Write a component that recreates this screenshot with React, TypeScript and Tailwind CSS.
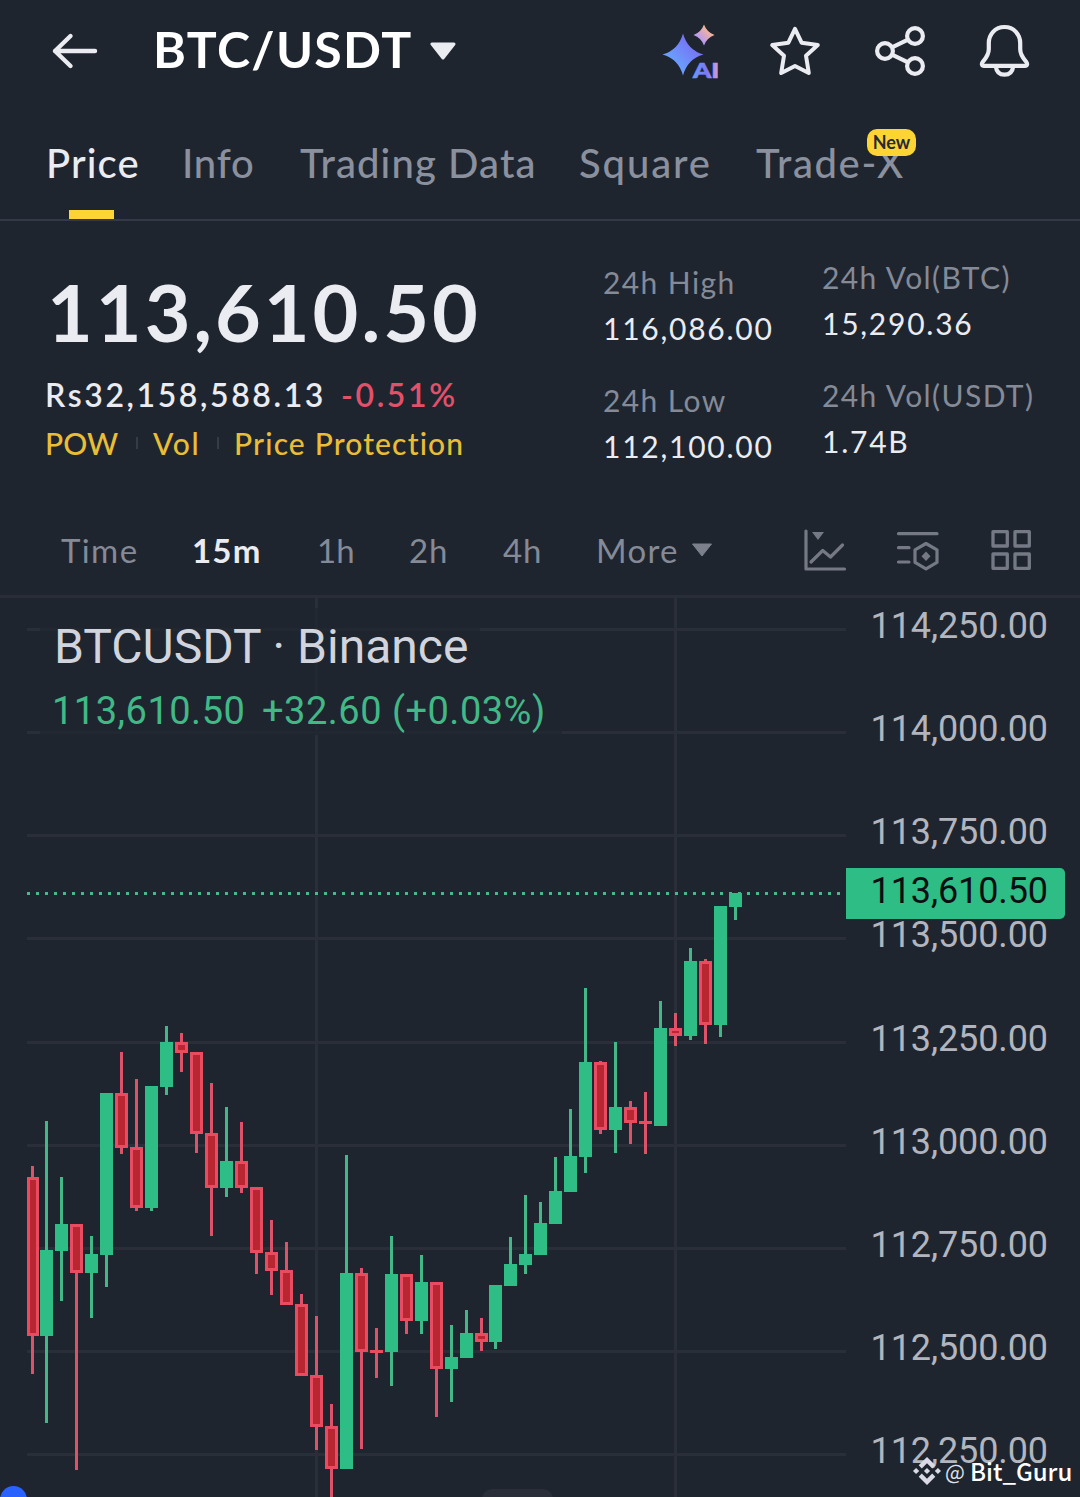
type Candle = { x: number; top: number; bottom: number; high: number; low: number; up: boolean };

// [left, body top, body bottom, high, low, up]
const rows: [number, number, number, number, number, 0 | 1][] = [
  [40, 1250, 1336, 1121, 1423, 1],
  [55, 1224, 1251, 1177, 1301, 1],
  [70, 1224, 1273, 1224, 1470, 0],
  [85, 1254, 1273, 1236, 1318, 1],
  [100, 1093, 1255, 1093, 1287, 1],
  [115, 1093, 1148, 1052, 1154, 0],
  [130, 1147, 1208, 1079, 1211, 0],
  [145, 1086, 1208, 1086, 1211, 1],
  [160, 1042, 1087, 1026, 1095, 1],
  [175, 1042, 1053, 1033, 1072, 0],
  [190, 1052, 1134, 1052, 1153, 0],
  [205, 1133, 1188, 1083, 1236, 0],
  [220, 1161, 1188, 1107, 1197, 1],
  [235, 1161, 1188, 1122, 1193, 0],
  [250, 1187, 1253, 1187, 1274, 0],
  [265, 1252, 1271, 1220, 1295, 0],
  [280, 1270, 1305, 1242, 1305, 0],
  [295, 1304, 1376, 1294, 1376, 0],
  [310, 1375, 1427, 1316, 1450, 0],
  [325, 1426, 1469, 1404, 1497, 0],
  [340, 1273, 1469, 1155, 1469, 1],
  [355, 1273, 1352, 1268, 1449, 0],
  [370, 1350, 1353, 1328, 1378, 0],
  [385, 1274, 1352, 1236, 1386, 1],
  [400, 1274, 1321, 1274, 1334, 0],
  [415, 1282, 1321, 1255, 1334, 1],
  [430, 1282, 1369, 1282, 1417, 0],
  [445, 1357, 1369, 1325, 1402, 1],
  [460, 1333, 1358, 1310, 1358, 1],
  [475, 1333, 1342, 1318, 1351, 0],
  [489, 1285, 1342, 1285, 1349, 1],
  [504, 1264, 1286, 1237, 1286, 1],
  [519, 1254, 1265, 1195, 1274, 1],
  [534, 1223, 1255, 1202, 1255, 1],
  [549, 1191, 1224, 1157, 1224, 1],
  [564, 1156, 1192, 1109, 1192, 1],
  [579, 1062, 1157, 988, 1173, 1],
  [594, 1062, 1130, 1061, 1134, 0],
  [609, 1107, 1130, 1042, 1153, 1],
  [624, 1107, 1123, 1101, 1144, 0],
  [639, 1121, 1124, 1092, 1154, 0],
  [654, 1028, 1126, 1001, 1126, 1],
  [669, 1028, 1036, 1013, 1046, 0],
  [684, 961, 1036, 948, 1040, 1],
  [699, 961, 1025, 959, 1044, 0],
  [714, 906, 1025, 906, 1037, 1],
  [729, 893, 907, 893, 920, 1],
];

const candles: Candle[] = rows.map(([x, top, bottom, high, low, up]) => ({
  x,
  top,
  bottom,
  high,
  low,
  up: up === 1,
}));

const gridRows = [629, 732, 835, 938, 1042, 1145, 1248, 1351, 1454];

const axisLabels = [
  "114,250.00",
  "114,000.00",
  "113,750.00",
  "113,500.00",
  "113,250.00",
  "113,000.00",
  "112,750.00",
  "112,500.00",
  "112,250.00",
];

const tabs = [
  { label: "Price", box: "w-[136px] tracking-[1.1px]", active: true },
  { label: "Info", box: "w-[118px] tracking-[0.8px]" },
  { label: "Trading Data", box: "w-[279px] tracking-[1.1px]" },
  { label: "Square", box: "w-[177px] tracking-[1.9px]" },
  { label: "Trade-X", box: "w-[160px] tracking-[1.6px]", badge: "New" },
];

const intervals = [
  { label: "Time", box: "w-[131px] tracking-[1.4px]" },
  { label: "15m", box: "w-[125px] tracking-[1.2px]", active: true },
  { label: "1h", box: "w-[92px] tracking-[0px]" },
  { label: "2h", box: "w-[94px] tracking-[0.8px]" },
  { label: "4h", box: "w-[93px] tracking-[0.8px]" },
  { label: "More", box: "w-[95px] tracking-[1.3px]" },
];

function Header() {
  return (
    <header className="flex h-[102px] items-center">
      <svg className="ml-[50px] h-[40px] w-[50px] shrink-0" viewBox="50 31 50 40" fill="none" stroke="#eaecf2" strokeWidth="4.4" strokeLinecap="round" strokeLinejoin="round">
        <path d="M95 51H55M70.5 36L55 51L70.5 66" />
      </svg>
      <h1 className="-mt-[4px] ml-[53px] w-[272px] shrink-0 whitespace-nowrap text-[50px] font-bold leading-[60px] tracking-[1.3px] text-white">BTC/USDT</h1>
      <svg className="ml-[4px] h-[18px] w-[28px] shrink-0" viewBox="0 0 28 18">
        <path d="M3 2H25L14 16Z" fill="#eaecf2" stroke="#eaecf2" strokeWidth="3" strokeLinejoin="round" />
      </svg>
      <svg className="ml-[203px] h-[60px] w-[64px] shrink-0" viewBox="660 21 64 60">
        <defs>
          <linearGradient id="spark" x1="0" y1="1" x2="1" y2="0">
            <stop offset="0.2" stopColor="#67a9ff" />
            <stop offset="0.7" stopColor="#7577f4" />
          </linearGradient>
          <linearGradient id="glow" x1="0" y1="1" x2="1" y2="0">
            <stop offset="0.3" stopColor="#b99af0" />
            <stop offset="0.7" stopColor="#f0b29c" />
          </linearGradient>
          <linearGradient id="ai" x1="0" y1="0" x2="1" y2="0">
            <stop offset="0" stopColor="#6a9bfb" />
            <stop offset="0.55" stopColor="#7b78f5" />
            <stop offset="1" stopColor="#d6a3d4" />
          </linearGradient>
        </defs>
        <path d="M683 33.5Q687.5 50 703.5 54.5Q687.5 59 683 75.5Q678.5 59 662.5 54.5Q678.5 50 683 33.5Z" fill="url(#spark)" />
        <path d="M704 24.5Q706.8 32.2 714.5 35Q706.8 37.8 704 45.5Q701.2 37.8 693.5 35Q701.2 32.2 704 24.5Z" fill="url(#glow)" />
        <text x="693" y="77.5" textLength="26" lengthAdjust="spacingAndGlyphs" fontSize="21" fontWeight="900" fill="url(#ai)" stroke="url(#ai)" strokeWidth="0.7">AI</text>
      </svg>
      <svg className="ml-[41px] h-[60px] w-[60px] shrink-0" viewBox="765 22 60 60" fill="none" stroke="#eaecf2" strokeWidth="4" strokeLinejoin="round">
        <path d="M795 29.8L801.6 43.7L817.8 46L806 56.7L808.8 74L795 67L781.2 74L784 56.7L772.2 46L788.4 43.7Z" />
      </svg>
      <svg className="ml-[45px] h-[60px] w-[60px] shrink-0" viewBox="870 21 60 60" fill="none" stroke="#eaecf2" strokeWidth="4.2">
        <circle cx="885" cy="51" r="7.9" />
        <circle cx="915" cy="36" r="7.9" />
        <circle cx="915" cy="66" r="7.9" />
        <path d="M892 47.3L908 39.6M892 54.7L908 62.4" />
      </svg>
      <svg className="ml-[44px] h-[60px] w-[60px] shrink-0" viewBox="974 21 60 60" fill="none" stroke="#eaecf2" strokeWidth="4.2" strokeLinejoin="round">
        <path d="M1004.5 27C995 27 988.8 34.5 988.8 43V49C988.8 55 986 58 983 61.5C981 64 982 65.8 984 65.8H1025C1027 65.8 1028 64 1026 61.5C1023 58 1020.2 55 1020.2 49V43C1020.2 34.5 1014 27 1004.5 27Z" />
        <path d="M995.8 66.5C996.5 72 1000 74.7 1004.5 74.7S1012.5 72 1013.2 66.5" />
      </svg>
    </header>
  );
}

function Tabs() {
  return (
    <nav className="flex h-[119px] border-b-2 border-[#343a45] pl-[46px] pt-[36px]">
      {tabs.map((tab) => (
        <div
          key={tab.label}
          className={`relative h-[81px] shrink-0 whitespace-nowrap text-[40px] font-medium leading-[50px] ${tab.box} ${
            tab.active ? "text-[#eaecf2]" : "text-[#8a909d]"
          }`}
        >
          {tab.label}
          {tab.active && <span className="absolute bottom-0 left-[23px] h-[9px] w-[45px] bg-[#fcd535]" />}
          {tab.badge && (
            <span className="absolute -top-[9px] left-[111px] h-[27px] w-[49px] rounded-[10px] bg-[#fcd535] text-center text-[18px] font-bold leading-[27px] tracking-[0px] text-[#252a33]">
              {tab.badge}
            </span>
          )}
        </div>
      ))}
    </nav>
  );
}

function Stat({ label, value }: { label: string; value: string }) {
  return (
    <div className="h-[118px] whitespace-nowrap text-[30px] leading-[46px]">
      <div className="tracking-[1.4px] text-[#858a97]">{label}</div>
      <div className="tracking-[1.75px] text-[#eaecf2]">{value}</div>
    </div>
  );
}

function Summary() {
  return (
    <section className="flex h-[285px]">
      <div className="w-[557px] pl-[45px] pt-[42px]">
        <div className="whitespace-nowrap pl-[2px] text-[79px] font-bold leading-[98px] tracking-[3px] text-[#eaecf2]">113,610.50</div>
        <div className="mt-[10px] flex whitespace-nowrap text-[32px] font-semibold leading-[48px]">
          <span className="w-[296px] tracking-[2.6px] text-[#eaecf2]">Rs32,158,588.13</span>
          <span className="tracking-[2.6px] text-[#e3506a]">-0.51%</span>
        </div>
        <div className="-mt-px flex items-center whitespace-nowrap text-[30px] font-medium leading-[50px] text-[#e9bd36]">
          <span className="w-[91px] tracking-[0px]">POW</span>
          <span className="h-[12px] w-[2px] bg-[#363b46]" />
          <span className="ml-[15px] w-[64px] tracking-[1.6px]">Vol</span>
          <span className="h-[12px] w-[2px] bg-[#363b46]" />
          <span className="ml-[15px] tracking-[1.15px]">Price Protection</span>
        </div>
      </div>
      <div className="w-[219px] pl-[46px] pt-[38px]">
        <Stat label="24h High" value="116,086.00" />
        <Stat label="24h Low" value="112,100.00" />
      </div>
      <div className="pl-[46px] pt-[33px]">
        <Stat label="24h Vol(BTC)" value="15,290.36" />
        <Stat label="24h Vol(USDT)" value="1.74B" />
      </div>
    </section>
  );
}

function IntervalBar() {
  return (
    <div className="flex h-[92px] items-center border-b-[3px] border-[#292d37] pb-[2px] pl-[61px]">
      {intervals.map((item) => (
        <span
          key={item.label}
          className={`shrink-0 whitespace-nowrap text-[33px] leading-[46px] ${item.box} ${
            item.active ? "font-bold text-[#eaecf2]" : "text-[#858a97]"
          }`}
        >
          {item.label}
        </span>
      ))}
      <svg className="h-[14px] w-[22px] shrink-0" viewBox="0 0 22 14">
        <path d="M1.5 1H20.5L11 13Z" fill="#7b808c" stroke="#7b808c" strokeLinejoin="round" />
      </svg>
      <svg className="ml-[89px] h-[46px] w-[46px] shrink-0" viewBox="802 527 46 46" fill="none" stroke="#747985" strokeWidth="3.2" strokeLinecap="round" strokeLinejoin="round">
        <path d="M806 531V569H844.5" />
        <path d="M811 562L822.7 550.5L830.5 557L842.5 545" />
        <path d="M812 532H824L818 540Z" fill="#747985" stroke="none" />
      </svg>
      <svg className="ml-[47px] h-[46px] w-[46px] shrink-0" viewBox="895 527 46 46" fill="none" stroke="#747985" strokeWidth="3.2" strokeLinecap="round" strokeLinejoin="round">
        <path d="M898.5 533.7H937M898.5 547.7H909M898.5 562H909" />
        <path d="M926 543.5L937 549.8V562.4L926 568.8L915 562.4V549.8Z" />
        <path d="M926 551.5L930.5 556.2L926 561L921.5 556.2Z" fill="#747985" stroke="none" />
      </svg>
      <svg className="ml-[48px] h-[46px] w-[46px] shrink-0" viewBox="989 527 46 46" fill="none" stroke="#747985" strokeWidth="3.3" strokeLinejoin="round">
        <rect x="993" y="531.7" width="14.3" height="14.3" />
        <rect x="1015" y="531.7" width="14.3" height="14.3" />
        <rect x="993" y="554" width="14.3" height="14.3" />
        <rect x="1015" y="554" width="14.3" height="14.3" />
      </svg>
    </div>
  );
}

function CandleChart() {
  return (
    <svg className="h-[899px] w-[846px] shrink-0" viewBox="0 598 846 899">
      <g fill="#292e38">
        {gridRows.map((y) => (
          <rect key={y} x="27" y={y - 1} width="819" height="3" />
        ))}
        <rect x="315" y="598" width="3" height="899" />
        <rect x="674" y="598" width="3" height="899" />
      </g>
      {/* legend backdrop dims the grid underneath */}
      <g fill="#1f252f" opacity="0.65">
        <rect x="40" y="608" width="440" height="76" />
        <rect x="40" y="684" width="522" height="51" />
      </g>
      <line x1="27" x2="846" y1="893.5" y2="893.5" stroke="#4ab989" strokeWidth="3" strokeDasharray="3 6" />

      {/* first candle is cut by the left edge of the plot */}
      <rect x="31" y="1166" width="3" height="208" fill="#d9536a" />
      <rect x="28.5" y="1178.5" width="9" height="156" fill="#b82632" stroke="#e94b60" strokeWidth="3" />

      {candles.map((c) => (
        <g key={c.x}>
          <rect x={c.x + 5} y={c.high} width="3" height={c.low - c.high} fill={c.up ? "#43b788" : "#dc5268"} />
          {c.up || c.bottom - c.top < 5 ? (
            <rect x={c.x} y={c.top} width="13" height={c.bottom - c.top} fill={c.up ? "#2ebd85" : "#e94b60"} />
          ) : (
            <rect
              x={c.x + 1.5}
              y={c.top + 1.5}
              width="10"
              height={c.bottom - c.top - 3}
              fill="#b82632"
              stroke="#e94b60"
              strokeWidth="3"
            />
          )}
        </g>
      ))}
      <circle cx="13.5" cy="1499.5" r="13.5" fill="#2962ff" />
      <rect x="482" y="1489" width="71" height="20" rx="10" fill="#292e38" />
    </svg>
  );
}

function Watermark() {
  return (
    <div className="absolute bottom-[9px] left-[913px] flex h-[34px] items-center whitespace-nowrap font-['Noto_Sans_CJK_SC','Noto_Sans',sans-serif] font-medium text-white">
      <svg className="h-[28px] w-[28px]" viewBox="0 0 28 28" fill="#d9dae6">
        <path d="M14 0L22.3 8.3L19.2 11.4L14 6.2L8.8 11.4L5.7 8.3Z" />
        <path d="M14 28L22.3 19.7L19.2 16.6L14 21.8L8.8 16.6L5.7 19.7Z" />
        <path d="M14 10.9L17.1 14L14 17.1L10.9 14Z" />
        <path d="M3.1 10.9L6.2 14L3.1 17.1L0 14Z" />
        <path d="M24.9 10.9L28 14L24.9 17.1L21.8 14Z" />
      </svg>
      <span className="ml-[4px] w-[25px] text-[21px] font-normal leading-[32px] text-[#dfe0ea]">@</span>
      <span className="text-[24px] leading-[34px]">Bit_Guru</span>
    </div>
  );
}

export default function App() {
  return (
    <div className="relative h-[1497px] w-[1080px] overflow-hidden bg-[#1f252f] font-['Lato','Open_Sans',sans-serif]">
      <Header />
      <Tabs />
      <Summary />
      <IntervalBar />
      <main className="relative flex h-[899px] font-['Roboto',sans-serif]">
        <CandleChart />
        <div className="flex w-[202px] flex-col text-right text-[36px] tracking-[-0.1px] text-[#b2b5be]">
          {axisLabels.map((label) => (
            <span key={label} className="h-[103.15px] shrink-0 leading-[56px]">
              {label}
            </span>
          ))}
        </div>
        <div className="absolute left-[52px] top-[21px] whitespace-nowrap">
          <div className="pl-[2px] text-[48px] leading-[56px] text-[#d1d4dc]">BTCUSDT · Binance</div>
          <div className="mt-[13px] flex text-[38px] leading-[46px] tracking-[0.5px] text-[#42b887]">
            <span className="w-[210px]">113,610.50</span>
            <span>+32.60 (+0.03%)</span>
          </div>
        </div>
        <div className="absolute left-[846px] top-[270px] h-[51px] w-[219px] rounded-r-[5px] bg-[#2ebd85] pr-[17px] text-right text-[36px] leading-[46px] tracking-[-0.1px] text-[#0c0e12]">
          113,610.50
        </div>
      </main>
      <Watermark />
    </div>
  );
}
